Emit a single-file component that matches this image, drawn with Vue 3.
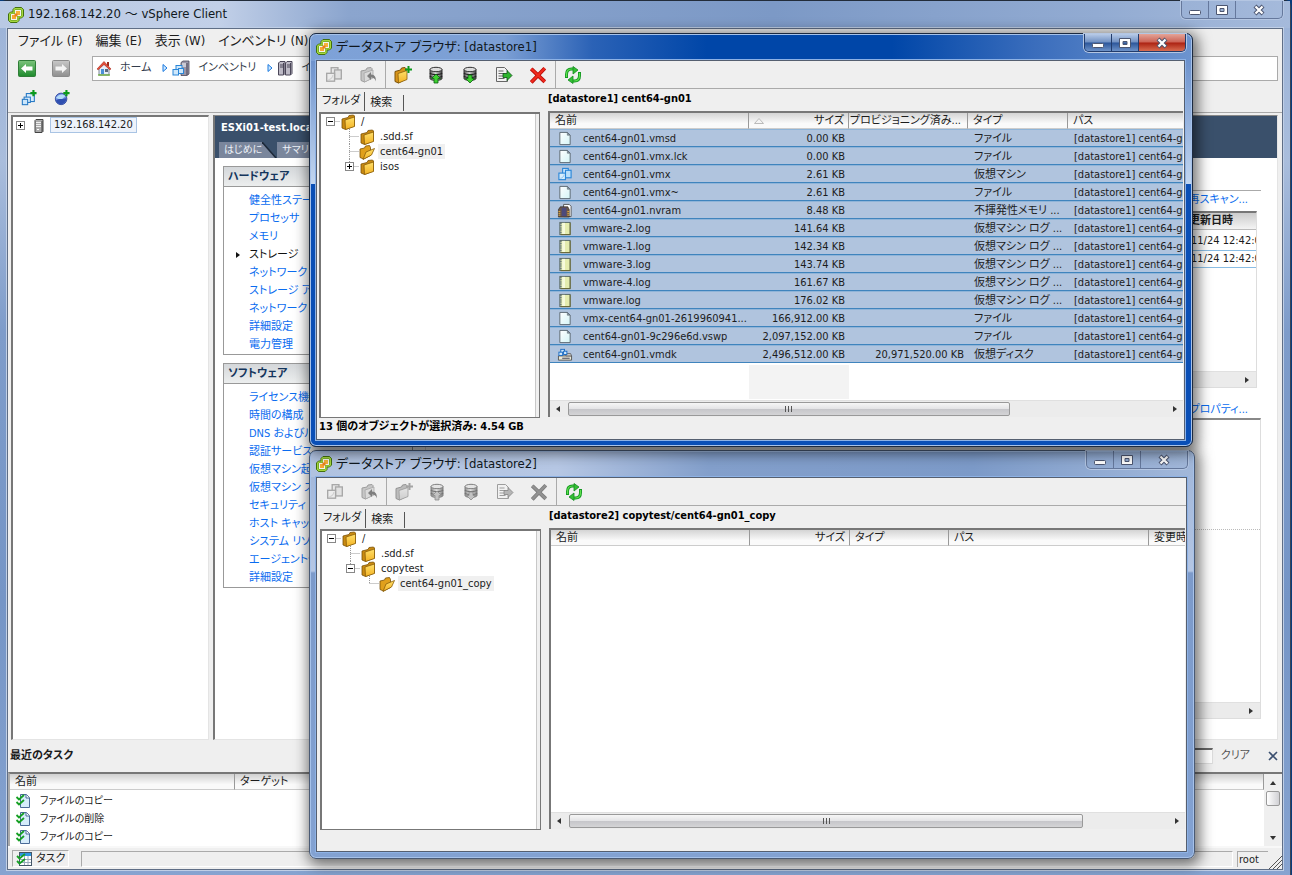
<script setup>
const menus = ['ファイル (F)', '編集 (E)', '表示 (W)', 'インベントリ (N)']
const hardware = ['健全性ステータス', 'プロセッサ', 'メモリ', 'ストレージ', 'ネットワーク', 'ストレージ アダプタ', 'ネットワーク アダプタ', '詳細設定', '電力管理']
const software = ['ライセンス機能', '時間の構成', 'DNS およびルーティング', '認証サービス', '仮想マシン起動', '仮想マシン スワップ', 'セキュリティ プロファイル', 'ホスト キャッシュ', 'システム リソース', 'エージェント仮想', '詳細設定']
const tasks = ['ファイルのコピー', 'ファイルの削除', 'ファイルのコピー']

const file = 'ファイル'
const log = '仮想マシン ログ ...'
const row = (icon, name, size, type, prov = '') => ({ icon, name, size, prov, type, path: '[datastore1] cent64-gn01' })
const files = [
  row('file', 'cent64-gn01.vmsd', '0.00 KB', file),
  row('file', 'cent64-gn01.vmx.lck', '0.00 KB', file),
  row('vm', 'cent64-gn01.vmx', '2.61 KB', '仮想マシン'),
  row('file', 'cent64-gn01.vmx~', '2.61 KB', file),
  row('nvram', 'cent64-gn01.nvram', '8.48 KB', '不揮発性メモリ ...'),
  row('log', 'vmware-2.log', '141.64 KB', log),
  row('log', 'vmware-1.log', '142.34 KB', log),
  row('log', 'vmware-3.log', '143.74 KB', log),
  row('log', 'vmware-4.log', '161.67 KB', log),
  row('log', 'vmware.log', '176.02 KB', log),
  row('file', 'vmx-cent64-gn01-2619960941...', '166,912.00 KB', file),
  row('file', 'cent64-gn01-9c296e6d.vswp', '2,097,152.00 KB', file),
  row('disk', 'cent64-gn01.vmdk', '2,496,512.00 KB', '仮想ディスク', '20,971,520.00 KB'),
]

const tools = [
  { id: 'vm', label: '登録', off: [1, 2] },
  { id: 'movefolder', label: '上へ', off: [1, 2] },
  { id: 'newfolder', label: '新規フォルダ', sep: true, off: [2] },
  { id: 'upload', label: 'アップロード', off: [2] },
  { id: 'download', label: 'ダウンロード', off: [2] },
  { id: 'moveto', label: '移動', off: [2] },
  { id: 'delete', label: '削除', off: [2] },
  { id: 'refresh', label: '更新', sep: true, off: [] },
]

const browsers = [
  {
    n: 1,
    title: 'データストア ブラウザ: [datastore1]',
    heading: '[datastore1] cent64-gn01',
    thumb: '74%',
    status: '13 個のオブジェクトが選択済み: 4.54 GB',
    tree: [
      { level: 0, text: '/', box: 'minus' },
      { level: 1, text: '.sdd.sf' },
      { level: 1, text: 'cent64-gn01', open: true },
      { level: 1, text: 'isos', box: 'plus', last: true },
    ],
    cols: [
      { k: 'name', t: '名前', w: 199 },
      { k: 'size', t: 'サイズ', w: 100, right: true, sort: true },
      { k: 'prov', t: 'プロビジョニング済み...', w: 119, right: true },
      { k: 'type', t: 'タイプ', w: 100 },
      { k: 'path', t: 'パス' },
    ],
    rows: files,
  },
  {
    n: 2,
    title: 'データストア ブラウザ: [datastore2]',
    heading: '[datastore2] copytest/cent64-gn01_copy',
    thumb: '86%',
    status: '',
    tree: [
      { level: 0, text: '/', box: 'minus' },
      { level: 1, text: '.sdd.sf' },
      { level: 1, text: 'copytest', box: 'minus', last: true },
      { level: 2, text: 'cent64-gn01_copy', open: true, last: true },
    ],
    cols: [
      { k: 'name', t: '名前', w: 199 },
      { k: 'size', t: 'サイズ', w: 100, right: true },
      { k: 'type', t: 'タイプ', w: 99 },
      { k: 'path', t: 'パス', w: 200 },
      { k: 'time', t: '変更時間' },
    ],
    rows: [],
  },
]
</script>

<template>
  <svg class="defs" aria-hidden="true">
    <linearGradient id="gFold" x2="0" y2="1"><stop offset="0" stop-color="#ffe06a" /><stop offset="1" stop-color="#f3b224" /></linearGradient>
    <linearGradient id="gGreen" x2="0" y2="1"><stop offset="0" stop-color="#7cc47c" /><stop offset="1" stop-color="#1d8a2c" /></linearGradient>
    <linearGradient id="gGray" x2="0" y2="1"><stop offset="0" stop-color="#c8c8c8" /><stop offset="1" stop-color="#8f8f8f" /></linearGradient>
    <linearGradient id="gDb" x2="1" y2="0"><stop offset="0" stop-color="#555" /><stop offset=".45" stop-color="#ddd" /><stop offset="1" stop-color="#444" /></linearGradient>
    <linearGradient id="gPage" x2="1" y2="1"><stop offset="0" stop-color="#fff" /><stop offset="1" stop-color="#d4f4f6" /></linearGradient>
    <symbol id="logo" viewBox="0 0 16 16">
      <path d="M7 .5h6.500l2 2V9l-2 2H11v2.500l-2 2H2.500l-2-2V7l2-2H5V2.500z" fill="#6fa426" stroke="#42700e" />
      <path d="M7.200 1.600h6l1.200 1.200v6l-1.200 1.200H10v3.200l-1.200 1.200h-6l-1.200-1.200v-6l1.200-1.200H6V2.800z" fill="none" stroke="#a6d83e" stroke-width="1.200" />
      <path d="M7 3h6v6H9v4H3V7h4z" fill="#f4f4f0" />
      <path d="M8 4h4v4H8z" fill="#f7b13c" /><path d="M4 8h4v4H4z" fill="#f7a733" /><path d="M6.500 6.500h3v3h-3z" fill="#e8801c" />
    </symbol>
    <symbol id="back" viewBox="0 0 18 17">
      <rect x=".5" y=".5" width="17" height="16" rx="1" fill="url(#gGreen)" stroke="#2f7d38" />
      <path d="M3 8.500 8 4v2.500h6.500v4H8V13z" fill="#fff" />
    </symbol>
    <symbol id="forward" viewBox="0 0 18 17">
      <rect x=".5" y=".5" width="17" height="16" rx="1" fill="url(#gGray)" stroke="#8a8a8a" />
      <path d="M15 8.500 10 4v2.500H3.500v4H10V13z" fill="#f4f4f4" />
    </symbol>
    <symbol id="home" viewBox="0 0 16 16">
      <path d="M3 8v7h10V8L8 4z" fill="#e6eef8" stroke="#5a6a80" stroke-width=".8" /><path d="M11 2h2v4h-2z" fill="#9a2a1a" />
      <path d="M1 9 8 1.500 15 9l-1.200.8L8 4.500 2.200 9.800z" fill="#e8503a" stroke="#a82a1c" stroke-width=".6" />
      <path d="M5 9h3v5H5z" fill="#4a90d8" /><path d="M9 9h3v3H9z" fill="#5a6a80" /><path d="M2 15h12" stroke="#70b040" stroke-width="1.4" />
    </symbol>
    <symbol id="vm" viewBox="0 0 16 16">
      <rect x="5.500" y="1.500" width="6" height="6" fill="#cfe8fb" stroke="#2a86d8" stroke-width="1.200" />
      <rect x="8.500" y="3.500" width="6" height="8" fill="#b8defa" stroke="#2a86d8" stroke-width="1.200" />
      <rect x="1.500" y="6.500" width="7" height="7" fill="#d8eefc" stroke="#2a86d8" stroke-width="1.200" />
      <path d="M3 12c2 0 4-2 4-4" stroke="#8cc4f0" fill="none" />
    </symbol>
    <symbol id="addvm" viewBox="0 0 18 18">
      <rect x="6" y="4" width="9" height="9" fill="#d8ecfc" stroke="#2678c4" stroke-width="1.200" />
      <rect x="3.500" y="8" width="7" height="6" fill="#e6f4ff" stroke="#2678c4" stroke-width="1.200" />
      <rect x="1.500" y="10.500" width="6" height="6" fill="#cce6fb" stroke="#2678c4" stroke-width="1.200" />
      <path d="M14 0v7M10.500 3.500h7" stroke="#0c9a1c" stroke-width="2.400" />
    </symbol>
    <symbol id="addpool" viewBox="0 0 18 18">
      <circle cx="8" cy="10" r="6.500" fill="#6a8ae0" stroke="#30489c" /><path d="M2 9C6 4 10 4 13 7L8 11z" fill="#b4dcf8" /><path d="M2 12c4-3 8-1 12-3 0 4-3 7-6 7s-5-2-6-4z" fill="#2f4fb0" />
      <path d="M14 0v7M10.500 3.500h7" stroke="#0c9a1c" stroke-width="2.400" />
    </symbol>
    <symbol id="inventory" viewBox="0 0 18 16">
      <path d="M9 2.500 11 1h6v13l-2 1.500H9z" fill="#9a96a8" stroke="#4a4658" stroke-width=".8" /><path d="M10 4h4M10 6h4" stroke="#fff" /><path d="M15 3v12" stroke="#4a4658" />
      <rect x="4" y="5.500" width="6" height="6" fill="#cfe8fb" stroke="#2a86d8" /><rect x="6.500" y="8.500" width="5" height="5" fill="#cfe8fb" stroke="#2a86d8" /><rect x="1" y="9.500" width="5.500" height="5.500" fill="#cfe8fb" stroke="#2a86d8" />
    </symbol>
    <symbol id="servers" viewBox="0 0 16 16">
      <path d="M1.500 3 3 1.500h5v12L6.500 15h-5z" fill="#bdbac6" stroke="#4a4658" /><path d="M8.500 3 10 1.500h5v12L13.500 15h-5z" fill="#bdbac6" stroke="#4a4658" />
      <path d="M3 5h3M3 7h3M10 5h3M10 7h3M6.500 3v12M13.500 3v12" stroke="#4a4658" />
    </symbol>
    <symbol id="host" viewBox="0 0 10 14">
      <path d="M1 1.500 2 .5h7v12l-1 1H1z" fill="#aaa" stroke="#444" /><path d="M2 3.500h5M2 5.500h5M2 7.500h5" stroke="#eee" /><path d="M8 2v11" stroke="#444" /><path d="M3 10.500h2" stroke="#fff" />
    </symbol>
    <symbol id="folder" viewBox="0 0 16 16">
      <path d="M2 5 8 3.500 9 1.500 13.500 1l1 1v10l-9 3.500L2 14z" fill="#c98a10" stroke="#7a5208" stroke-width=".8" />
      <path d="m5 6 9.500-3v9.500L5.500 15.500z" fill="url(#gFold)" stroke="#8a5e0a" stroke-width=".8" />
    </symbol>
    <symbol id="folderopen" viewBox="0 0 16 16">
      <path d="M1 5 5.500 4l1-2 4-.5 1 2v8L4.500 15 1 13.500z" fill="#e0a01c" stroke="#7a5208" stroke-width=".8" />
      <path d="M7 8 15.500 4.500 12.500 11 4 15.500z" fill="url(#gFold)" stroke="#8a5e0a" stroke-width=".8" />
    </symbol>
    <symbol id="movefolder" viewBox="0 0 18 18">
      <path d="M2 5 7 4l1-2 4-.5 1 1V12l-7.500 4L2 14.500z" fill="#aaa" stroke="#666" /><path d="m5 7 9-3v8l-8.500 4z" fill="#ccc" stroke="#777" stroke-width=".8" />
      <path d="m8 10 4-4v2.500c4 0 5 3 5 7-1-3-2.500-4-5-4V14z" fill="#333" />
    </symbol>
    <symbol id="newfolder" viewBox="0 0 18 18">
      <path d="M1 5.500 6.500 4l1-2 3.500-.5 1 1V13l-7.500 4L1 15.500z" fill="#d8941a" stroke="#7a5208" /><path d="m4 7.500 9-3v9L4.500 17z" fill="url(#gFold)" stroke="#8a5e0a" stroke-width=".8" />
      <path d="M14.500 0v7M11 3.500h7" stroke="#0c9a1c" stroke-width="2" />
    </symbol>
    <symbol id="upload" viewBox="0 0 16 18">
      <path d="M2 3.500v9C2 15 14 15 14 12.500v-9z" fill="url(#gDb)" stroke="#333" /><path d="M2 7c1 2 11 2 12 0M2 10c1 2 11 2 12 0" fill="none" stroke="#222" stroke-width="1.200" />
      <ellipse cx="8" cy="3.500" rx="6" ry="2.200" fill="#ddd" stroke="#333" /><path d="m8 8 4.500 4.500H10V17H6v-4.500H3.500z" fill="#3fd030" stroke="#0b5f12" stroke-width=".8" />
    </symbol>
    <symbol id="download" viewBox="0 0 16 18">
      <path d="M2 3.500v9C2 15 14 15 14 12.500v-9z" fill="url(#gDb)" stroke="#333" /><path d="M2 7c1 2 11 2 12 0M2 10c1 2 11 2 12 0" fill="none" stroke="#222" stroke-width="1.200" />
      <ellipse cx="8" cy="3.500" rx="6" ry="2.200" fill="#ddd" stroke="#333" /><path d="m8 17 4.500-4.500H10V9H6v3.500H3.500z" fill="#3fd030" stroke="#0b5f12" stroke-width=".8" />
    </symbol>
    <symbol id="moveto" viewBox="0 0 18 18">
      <path d="M1.500 1.500h8l3 3v11h-11z" fill="#f2f2f2" stroke="#666" /><path d="M3.500 5h5M3.500 7.500h6M3.500 10h6M3.500 12.500h6" stroke="#666" />
      <path d="M8 7.500h4V4.500l5 5-5 5v-3H8z" fill="#2cb52c" stroke="#0b4f12" stroke-width=".8" />
    </symbol>
    <symbol id="delete" viewBox="0 0 16 16"><path d="M2 2.500 14 14M14 2 2 14.500" stroke="#b80c08" stroke-width="3.400" /><path d="M2 2.500 14 14M14 2 2 14.500" stroke="#f02a1e" stroke-width="2" /></symbol>
    <symbol id="refresh" viewBox="0 0 18 18">
      <path d="M2.500 12V8.500c0-3.500 2-5.500 5-5.500H10M15.500 6v3.500c0 3.500-2 5.500-5 5.500H8" fill="none" stroke="#159a22" stroke-width="3" />
      <path d="M2.500 11V8.500C2.500 5.500 4 3 7.500 3H10M15.500 7v2.500c0 3-1.500 5.500-5 5.500H8" fill="none" stroke="#5ee04e" stroke-width="1.200" />
      <path d="M9 0v3h4v6l-4.500-3M13 4.500 9 8.500" fill="none" />
      <path d="M9 .5 14 4l-5 4z" fill="#34bf34" stroke="#128a20" stroke-width=".8" /><path d="M9 17.500 4 14l5-4z" fill="#34bf34" stroke="#128a20" stroke-width=".8" />
    </symbol>
    <symbol id="file" viewBox="0 0 16 16"><path d="M2.500 1.500h8l3 3v10h-11z" fill="url(#gPage)" stroke="#5a6670" /><path d="M10.500 1.500v3h3z" fill="#8a98a4" stroke="#5a6670" stroke-width=".6" /></symbol>
    <symbol id="log" viewBox="0 0 16 16"><rect x="2.500" y="1.500" width="11" height="13" fill="#e4ecae" stroke="#566" /><path d="M5 2h3v12H5z" fill="#f6fadc" /><path d="M3.500 2v12" stroke="#567" stroke-width="2" stroke-dasharray="1 1" /><path d="M13.500 2v12.500h-10" fill="none" stroke="#6c6a30" /></symbol>
    <symbol id="nvram" viewBox="0 0 16 16">
      <path d="M6.500 1.500h6l2 2v11h-8z" fill="#fff" stroke="#555" /><path d="M1 7l2-3h8l1.500 3v8H1z" fill="#6a564a" stroke="#221a14" stroke-width=".6" /><rect x="4.500" y="5" width="5" height="9" fill="#4c4a7c" />
      <path d="M1 9h2M1 11h2M1 13h2M10.500 9h2M10.500 11h2M10.500 13h2" stroke="#e8b040" />
    </symbol>
    <symbol id="disk" viewBox="0 0 16 16">
      <path d="M1 9.500h14V14H1z" fill="#e8e8d8" stroke="#555" /><path d="M9 7h5l1 2.500H9z" fill="#ccc" stroke="#555" stroke-width=".8" /><path d="M5 12h8" stroke="#556" stroke-width="1.200" />
      <rect x="3.500" y="2.500" width="4" height="4" fill="#cfe8fb" stroke="#1a6cc4" /><rect x="6.500" y="4.500" width="3.500" height="3.500" fill="#cfe8fb" stroke="#1a6cc4" /><rect x="1.500" y="5.500" width="4" height="3.500" fill="#cfe8fb" stroke="#1a6cc4" />
    </symbol>
    <symbol id="task" viewBox="0 0 16 16">
      <path d="M5.500 1.500h6l3 3v10h-9z" fill="#d6ecfb" stroke="#4a6a98" /><path d="M11 1.500v3.500h3.500" fill="#fff" stroke="#4a6a98" />
      <path d="m1.500 4 2.500 2.500L9 2M1.500 9l2.500 2.500L9 7" fill="none" stroke="#16a024" stroke-width="1.800" />
    </symbol>
    <symbol id="tasklist" viewBox="0 0 16 16">
      <rect x="3.500" y="1.500" width="12" height="13" fill="#fff" stroke="#456" /><path d="M4 2h11v3H4z" fill="#2f96e0" /><path d="M4 8.500h11M4 11.500h11M8.500 5v9M12 5v9" stroke="#9ab" />
      <path d="m1 5 2.500 2.500L9 3M1 10l2.500 2.500L9 8" fill="none" stroke="#16a024" stroke-width="1.800" />
    </symbol>
    <symbol id="min" viewBox="0 0 14 12"><rect x="1.500" y="6.500" width="11" height="4" rx="1" fill="#fff" stroke="#4c5670" /></symbol>
    <symbol id="max" viewBox="0 0 14 12"><path d="M1.500 1.500h11v9h-11zM5 4.500v3h4v-3z" fill="#fff" fill-rule="evenodd" stroke="#4c5670" /></symbol>
    <symbol id="cls" viewBox="0 0 14 12"><path d="m3 2 8 8M11 2l-8 8" stroke="#4c5670" stroke-width="4.200" /><path d="m3.500 2.500 7 7M10.500 2.500l-7 7" stroke="#fff" stroke-width="2.200" /></symbol>
  </svg>

  <div class="desktop">
    <main class="win main">
      <header class="title">
        <svg class="i16"><use href="#logo" /></svg>
        <h1>192.168.142.20 ～ vSphere Client</h1>
        <div class="caption">
          <button aria-label="最小化"><svg><use href="#min" /></svg></button>
          <button aria-label="最大化"><svg><use href="#max" /></svg></button>
          <button class="close" aria-label="閉じる"><svg><use href="#cls" /></svg></button>
        </div>
      </header>
      <div class="client">
        <nav class="menu"><button v-for="m in menus" :key="m">{{ m }}</button></nav>
        <div class="navrow">
          <button aria-label="戻る"><svg class="nav-i"><use href="#back" /></svg></button>
          <button aria-label="進む"><svg class="nav-i"><use href="#forward" /></svg></button>
          <div class="crumbs">
            <svg class="i16"><use href="#home" /></svg><a href="#">ホーム</a>
            <svg class="tri" viewBox="0 0 6 10"><path d="M1 1.500 5 5 1 8.500z" fill="#cfe8ff" stroke="#1a7ae0" /></svg>
            <svg class="i18"><use href="#inventory" /></svg><a href="#">インベントリ</a>
            <svg class="tri" viewBox="0 0 6 10"><path d="M1 1.500 5 5 1 8.500z" fill="#cfe8ff" stroke="#1a7ae0" /></svg>
            <svg class="i16"><use href="#servers" /></svg><a href="#">インベントリ</a>
          </div>
        </div>
        <div class="tools2">
          <button aria-label="新規仮想マシン"><svg class="i16"><use href="#addvm" /></svg></button>
          <button aria-label="新規リソース プール"><svg class="i16"><use href="#addpool" /></svg></button>
        </div>
        <div class="work">
          <div class="hosttree">
            <svg class="box" viewBox="0 0 9 9"><rect x=".5" y=".5" width="8" height="8" fill="#fff" stroke="#888" /><path d="M2 4.500h5M4.500 2v5" stroke="#000" /></svg>
            <svg class="host"><use href="#host" /></svg>
            <span>192.168.142.20</span>
          </div>
          <section class="config">
            <div class="band">
              <h2>ESXi01-test.localdomain</h2>
              <div class="htabs">
                <button>はじめに</button><svg viewBox="0 0 15 16"><path d="M0 0 14 16H0z" fill="#7a869c" /><path d="M0 0 14 16" stroke="#1c2838" stroke-width="1.500" /></svg><button>サマリ</button>
              </div>
            </div>
            <div class="cbody">
              <div class="boxes">
                <section class="nbox">
                  <h3>ハードウェア</h3>
                  <ul><li v-for="h in hardware" :key="h" :class="{ cur: h === 'ストレージ' }"><a href="#">{{ h }}</a></li></ul>
                </section>
                <section class="nbox">
                  <h3>ソフトウェア</h3>
                  <ul><li v-for="(s, i) in software" :key="i"><a href="#">{{ s }}</a></li></ul>
                </section>
              </div>
              <div class="detail">
                <div class="d-link top"><a href="#">再スキャン...</a></div>
                <div class="d-list">
                  <table>
                    <thead><tr><th>更新日時</th></tr></thead>
                    <tbody><tr><td>11/24 12:42:0</td></tr><tr><td>11/24 12:42:0</td></tr></tbody>
                  </table>
                  <div class="d-bar"><i class="ar rt"></i></div>
                </div>
                <div class="d-link props"><a href="#">プロパティ...</a></div>
                <div class="d-box"><div class="d-upper"></div><div class="d-bar"><i class="ar rt"></i></div></div>
              </div>
            </div>
          </section>
        </div>
        <div class="recent">
          <h2>最近のタスク</h2>
          <input type="text" aria-label="タスクのフィルタ" />
          <button class="clear">クリア</button>
          <button class="x" aria-label="閉じる"><svg viewBox="0 0 10 10"><path d="m1 1 8 8M9 1 1 9" stroke="#3c5070" stroke-width="1.600" /></svg></button>
        </div>
        <div class="tasklist">
          <table>
            <colgroup><col class="c-name" /><col /></colgroup>
            <thead><tr><th>名前</th><th>ターゲット</th></tr></thead>
            <tbody><tr v-for="(t, i) in tasks" :key="i"><td><svg class="i16"><use href="#task" /></svg>{{ t }}</td><td></td></tr></tbody>
          </table>
          <div class="vbar"><i class="ar up"></i><b></b><i class="ar down"></i></div>
        </div>
        <footer class="status">
          <button><svg class="i16"><use href="#tasklist" /></svg>タスク</button>
          <div class="field"></div>
          <div class="user">root</div>
          <svg class="grip" viewBox="0 0 14 14"><path d="M1 14 14 1M5 14l9-9M9 14l5-5" stroke="#555" /></svg>
        </footer>
      </div>
    </main>

    <section v-for="b in browsers" :key="b.n" class="win browser" :class="'b' + b.n">
      <header class="title">
        <svg class="i16"><use href="#logo" /></svg>
        <h1>{{ b.title }}</h1>
        <div class="caption">
          <button aria-label="最小化"><svg><use href="#min" /></svg></button>
          <button aria-label="最大化"><svg><use href="#max" /></svg></button>
          <button class="close" aria-label="閉じる"><svg><use href="#cls" /></svg></button>
        </div>
      </header>
      <div class="client">
        <div class="toolbar">
          <button v-for="t in tools" :key="t.id" :aria-label="t.label" :disabled="t.off.includes(b.n)" :class="{ sep: t.sep }">
            <svg class="i18"><use :href="'#' + t.id" /></svg>
          </button>
        </div>
        <div class="panes">
          <div class="folders">
            <div class="tabs"><button class="on">フォルダ</button><button>検索</button></div>
            <div class="tree">
              <ul>
                <li v-for="n in b.tree" :key="n.text" :class="'l' + n.level">
                  <svg class="gut" viewBox="0 0 19 15">
                    <path v-if="n.level" :d="n.last ? 'M9.500 0v8' : 'M9.500 0v15'" stroke="#999" stroke-dasharray="1 1" />
                    <path d="M9.500 7.500H19" stroke="#999" stroke-dasharray="1 1" />
                    <rect v-if="n.box" x="5.500" y="3.500" width="8" height="8" fill="#fff" stroke="#888" />
                    <path v-if="n.box" :d="n.box === 'plus' ? 'M7 7.500h5M9.500 5v5' : 'M7 7.500h5'" stroke="#000" />
                  </svg>
                  <svg class="i16"><use :href="n.open ? '#folderopen' : '#folder'" /></svg>
                  <span :class="{ sel: n.open }">{{ n.text }}</span>
                </li>
              </ul>
            </div>
            <div class="selinfo">{{ b.status }}</div>
          </div>
          <div class="contents">
            <h2>{{ b.heading }}</h2>
            <div class="grid">
              <div class="gscroll">
                <table>
                  <colgroup><col v-for="c in b.cols" :key="c.k" :style="c.w ? { width: c.w + 'px' } : {}" /></colgroup>
                  <thead>
                    <tr>
                      <th v-for="c in b.cols" :key="c.k" :class="{ tight: c.k === 'prov', r: c.right && c.k !== 'prov' }">
                        <div><svg v-if="c.sort" class="sort" viewBox="0 0 10 6"><path d="M.5 5.500 5 .5l4.500 5z" fill="#f4f4f4" stroke="#bbb" /></svg><span>{{ c.t }}</span></div>
                      </th>
                    </tr>
                  </thead>
                  <tbody>
                    <tr v-for="r in b.rows" :key="r.name">
                      <td v-for="c in b.cols" :key="c.k" :class="{ r: c.right }">
                        <svg v-if="c.k === 'name'" class="i16"><use :href="'#' + r.icon" /></svg>{{ r[c.k] }}
                      </td>
                    </tr>
                  </tbody>
                </table>
                <div v-if="b.rows.length" class="sortcol"></div>
              </div>
              <div class="hbar">
                <i class="ar lt"></i>
                <div class="track"><div class="thumb" :style="{ width: b.thumb }"><s></s><s></s><s></s></div></div>
                <i class="ar rt"></i>
              </div>
            </div>
          </div>
        </div>
      </div>
    </section>
  </div>
</template>

<style>
html, body { margin: 0; height: 100%; overflow: hidden; }
</style>

<style scoped>
.defs { position: absolute; width: 0; height: 0; }
.desktop {
  position: relative; height: 100vh; min-height: 640px; overflow: hidden; background: #083c7c;
  font: 11px/18px "DejaVu Sans Condensed", "Noto Sans CJK JP", sans-serif; font-feature-settings: "palt"; color: #1c1c1c;
}
.desktop * { box-sizing: border-box; }
button { font: inherit; font-feature-settings: inherit; color: inherit; background: none; border: 0; padding: 0; margin: 0; white-space: nowrap; display: flex; align-items: center; justify-content: center; }
h1, h2, h3 { margin: 0; font-size: inherit; font-weight: bold; white-space: nowrap; }
ul { margin: 0; padding: 0; list-style: none; white-space: nowrap; }
a { text-decoration: none; color: inherit; }
table { border-collapse: separate; border-spacing: 0; table-layout: fixed; width: 100%; }
svg { flex: none; display: block; }
.i16 { width: 16px; height: 16px; }
.i18 { width: 18px; height: 18px; }

.win { display: flex; flex-direction: column; }
.title { display: flex; align-items: center; flex: none; gap: 3px; }
.title h1 { font-size: 13px; line-height: 20px; font-weight: normal; color: #101820; padding: 0 4px 1px 1px; flex: 1; }
.caption { display: flex; align-self: flex-start; border: 1px solid #65789c; border-top: 0; border-radius: 0 0 5px 5px; box-shadow: 0 0 0 1px #b4c6e2; overflow: hidden; }
.caption button { width: 27px; height: 17px; border-right: 1px solid #65789c; }
.caption button.close { width: 46px; border-right: 0; }
.caption svg { width: 14px; height: 12px; }
.client { flex: 1; min-height: 0; display: flex; flex-direction: column; background: #efefef; }

.main {
  height: 100%; margin-right: 1px; padding: 0 7px 5px; border: 1px solid #3a4658; border-top-color: #222c3a; border-width: 1px 1px 0 0; border-radius: 6px 6px 0 0;
  background: linear-gradient(#8ea8d0 0, #9db4d8 28px, #a9bddc 160px, #7e9cca 330px, #7595c6 600px, #86a3d0 100%);
}
.main .title { height: 27px; margin: 0 -7px; padding: 0 7px 0 8px; background: linear-gradient(90deg, #b9c9e4, #c2d0e8 17%, #8ba5ce 27%, #7c99c6 60%, #92abd2 85%, #a5badb); }
.main .client { border: 1px solid #5f6e86; outline: 1px solid #c0cfe6; }

.menu { display: flex; height: 23px; gap: 13px; padding-left: 10px; font-size: 13px; flex: none; }
.navrow { display: flex; height: 32px; align-items: center; padding: 0 4px 0 10px; gap: 16px; flex: none; }
.nav-i { width: 18px; height: 17px; }
.crumbs { flex: 1; height: 25px; margin-left: 6px; background: #fff; border: 1px solid #aaa; display: flex; align-items: center; padding-left: 3px; gap: 4px; overflow: hidden; white-space: nowrap; color: #333c4c; }
.crumbs a { margin: 0 7px 0 4px; }
.tri { width: 6px; height: 10px; }
.tools2 { display: flex; height: 28px; gap: 17px; padding-left: 13px; flex: none; }
.work { flex: 1; min-height: 0; display: flex; gap: 4px; border-top: 1px solid #a8a8a8; padding: 2px 4px 0 3px; }
.hosttree { width: 198px; border: 1px solid #e4e4e4; border-left: 2px solid #777; border-top: 2px solid #777; background: #fff; display: flex; align-items: flex-start; padding: 0 0 0 3px; }
.hosttree .box { width: 9px; height: 9px; margin-top: 4px; }
.hosttree .host { width: 10px; height: 14px; margin: 2px 6px 0 9px; }
.hosttree span { border: 1px solid #a9c4e4; background: #eef3fb; line-height: 14px; padding: 0 3px; }
.config { flex: 1; min-width: 0; display: flex; flex-direction: column; border: 1px solid #e4e4e4; border-left: 2px solid #777; border-top: 1px solid #888; background: #fff; }
.band { background: #3a506b; color: #fff; height: 42px; flex: none; }
.band h2 { line-height: 23px; padding: 0 6px; height: 26px; }
.htabs { display: flex; padding-left: 4px; line-height: 16px; font-size: 10px; }
.htabs button { background: #7a869c; padding: 0 0 0 5px; height: 16px; color: #eef2f8; }
.htabs svg { width: 15px; height: 16px; }
.htabs button + svg + button { padding: 0 8px 0 5px; }
.cbody { flex: 1; min-height: 0; display: flex; padding: 8px 16px 20px 8px; gap: 12px; }
.boxes { width: 190px; flex: none; }
.nbox { border: 1px solid #999; margin-bottom: 8px; overflow: hidden; }
.nbox h3 { height: 20px; line-height: 19px; padding-left: 4px; color: #14355c; background: linear-gradient(#d4d7da, #eceeee); border-bottom: 1px solid #999; }
.nbox ul { padding: 5px 0 0 25px; color: #0a6cf0; }
.nbox li { height: 18px; }
.nbox li.cur { color: #111; display: flex; align-items: center; margin-left: -13px; }
.nbox li.cur::before { content: ""; border: 3px solid transparent; border-left: 4px solid #111; border-right: 0; margin-right: 9px; }
.detail { flex: 1; min-width: 0; display: flex; flex-direction: column; }
.d-link { text-align: right; color: #0a6cf0; padding-right: 13px; line-height: 18px; flex: none; }
.d-link.top { margin-top: 24px; border-top: 1px solid #aaa; height: 21px; }
.d-list { height: 177px; flex: none; margin-right: 4px; border: 1px solid #ddd; border-top: 2px solid #777; display: flex; flex-direction: column; justify-content: space-between; }
.d-list th, .d-list td { text-align: left; padding: 0 0 0 calc(100% - 65px); line-height: 18px; white-space: nowrap; overflow: hidden; }
.d-list th { padding-left: calc(100% - 67px); line-height: 16px; font-weight: bold; background: linear-gradient(#ccc, #f4f4f4); border-bottom: 1px solid #bbb; }
.d-list tbody tr:first-child td { border-top: 2px solid #fff; }
.d-list tr + tr td { line-height: 16px; border: 1px solid #8abde4; border-width: 1px 0; }
.d-bar { height: 16px; background: #ebebeb; display: flex; align-items: center; justify-content: flex-end; padding-right: 7px; border-top: 1px solid #e0e0e0; flex: none; }
.d-link.props { margin-top: 14px; line-height: 16px; }
.d-box { flex: 1; min-height: 0; border: 1px solid #ddd; border-top: 2px solid #888; display: flex; flex-direction: column; justify-content: space-between; }
.d-upper { height: 110px; border-bottom: 1px dotted #bbb; }

.ar { border: 3px solid transparent; width: 0; height: 0; flex: none; }
.ar.rt { border-left: 4px solid #333; border-right: 0; }
.ar.lt { border-right: 4px solid #333; border-left: 0; }
.ar.up { border-bottom: 4px solid #333; border-top: 0; }
.ar.down { border-top: 4px solid #333; border-bottom: 0; }

.recent { height: 32px; display: flex; align-items: center; padding: 0 4px 0 2px; flex: none; }
.recent h2 { flex: 1; }
.recent input { width: 160px; height: 16px; border: 1px solid #ddd; border-top: 2px solid #666; background: #fff; padding: 0; margin-right: 8px; }
.recent .clear { color: #555; margin-right: 18px; }
.recent .x svg { width: 10px; height: 10px; }
.tasklist { height: 74px; flex: none; border-top: 2px solid #777; border-left: 2px solid #aaa; background: #fff; display: flex; align-items: flex-start; }
.tasklist table { flex: 1; }
.c-name { width: 225px; }
th, td { padding: 0; font-weight: normal; text-align: left; white-space: nowrap; overflow: hidden; }
.tasklist th { height: 16px; line-height: 15px; padding-left: 5px; background: linear-gradient(#d0d0d0, #fafafa 70%); border-right: 1px solid #999; border-bottom: 1px solid #ccc; }
.tasklist td { height: 18px; padding-left: 5px; font-size: 10px; }
.tasklist td svg { display: inline-block; vertical-align: middle; margin-right: 9px; }
.tasklist tbody::before { content: ""; display: block; height: 2px; }
.vbar { width: 18px; height: 100%; background: #efefef; display: flex; flex-direction: column; align-items: center; padding: 7px 0 6px; }
.vbar b { width: 14px; height: 15px; margin: 6px 0 auto; border: 1px solid #999; border-radius: 2px; background: linear-gradient(90deg, #fff, #d0d0d4); }
.status { height: 23px; flex: none; display: flex; align-items: center; padding-left: 4px; border-top: 2px solid #f8f8f8; }
.status button { height: 17px; border: 1px solid #fff; border-top-color: #aaa; border-left-color: #aaa; padding: 0 3px; gap: 4px; }
.field { flex: 1; height: 16px; margin: 0 4px 0 12px; border: 1px solid #fff; border-top-color: #aaa; border-left-color: #aaa; }
.user { height: 16px; line-height: 15px; border-left: 1px solid #aaa; border-top: 1px solid #aaa; width: 31px; padding-left: 1px; }
.grip { width: 14px; height: 14px; align-self: flex-end; }

.browser { position: absolute; left: 309px; padding: 0 7px 6px 6px; border: 1px solid #1c2a40; border-radius: 7px; box-shadow: inset 0 0 0 1px #a6c2ea, 2px 3px 14px 3px rgba(0, 0, 0, .55); }
.browser .client { border: 1px solid #555f70; outline: 1px solid #8db2e6; }
.browser .title { height: 26px; margin: 0 -1px; padding-left: 1px; }
.b1 {
  top: 33px; right: 99px; bottom: 428px; z-index: 2;
  background:
    linear-gradient(90deg, #7ea2d8, #7c9fd4 22%, #2b62b6 32%, #0046a8 45%, #0046a8 66%, #3a6dbc 82%, #6d94cf) top / 100% 27px no-repeat,
    linear-gradient(#6d92cc, #c2d6f0) 0 27px / 100% 123px no-repeat,
    #0a4fb6;
}
.b1 .caption { border-color: #223c6c; }
.b1 .caption button { background: linear-gradient(#b8cbe8, #7090c2 48%, #2c569a 52%, #6d92c8); border-color: #223c6c; }
.b1 .caption button.close { background: linear-gradient(#e4a498, #cc6254 48%, #ac2212 52%, #d86c50); }
.b2 {
  top: 450px; right: 97px; bottom: 16px; z-index: 1; border-color: #4a5a74;
  background:
    linear-gradient(90deg, #b0c2e0, #b6c7e4 28%, #839fcb 45%, #7c9ac8 75%, #a2b8da) top / 100% 26px no-repeat,
    linear-gradient(#9fb5d9, #b4c6e4 120px, #7c9aca 122px, #83a2d2);
}
.b2 .client { padding-left: 1px; }
.toolbar { display: flex; height: 28px; border-bottom: 1px solid #aaa; flex: none; }
.toolbar button { width: 34px; }
.toolbar .sep { border-left: 1px solid #aaa; }
.toolbar button:disabled svg { filter: grayscale(1) opacity(.6); }
.toolbar .i18 { width: 18px; height: 18px; }
.panes { flex: 1; min-height: 0; display: flex; gap: 8px; padding: 0 1px 0 2px; }
.folders { width: 221px; display: flex; flex-direction: column; flex: none; }
.tabs { display: flex; height: 23px; padding: 3px 0 0 3px; flex: none; }
.tabs button { height: 16px; margin-top: 3px; padding: 0 11px 0 5px; border-right: 1px solid #555; }
.tabs .on { height: 19px; margin: 0; padding: 0 4px 2px 0; }
.tree { flex: 1; min-height: 0; background: #fff; border: 2px solid #777; border-width: 2px 1px 1px 2px; box-shadow: inset -3px 0 #f0f0f0, inset -4px 0 #c8c8c8; overflow: hidden; }
.tree li { display: flex; height: 15px; align-items: center; line-height: 15px; }
.gut { width: 19px; height: 15px; }
.tree .i16 { margin: 0 3px 0 0; }
.tree span { padding: 0 2px; }
.tree .sel { background: #f0f0f0; }
.l1 { padding-left: 19px; }
.l2 { padding-left: 38px; }
.selinfo { height: 21px; line-height: 17px; font-weight: bold; color: #000; flex: none; white-space: nowrap; overflow: visible; }
.contents { flex: 1; min-width: 0; display: flex; flex-direction: column; }
.contents h2 { height: 22px; line-height: 19px; color: #000; flex: none; }
.grid { flex: 1; min-height: 0; margin-bottom: 22px; display: flex; flex-direction: column; border-left: 2px solid #777; border-top: 2px solid #777; background: #fff; }
.gscroll { flex: 1; min-height: 0; overflow: hidden; display: flex; flex-direction: column; }
.grid th { height: 16px; background: linear-gradient(#d4d4d4, #fafafa 70%); border-bottom: 1px solid #ccc; padding: 0 4px 0 5px; border-right: 1px solid #999; }
.grid th.tight { padding: 0 0 0 1px; }
.grid th:last-child { border-right: 0; padding-right: 0; }
.grid th div { display: flex; align-items: center; height: 15px; line-height: 15px; }
.grid th.r div { justify-content: flex-end; }
.sort { width: 10px; height: 6px; margin-right: auto; }
.grid td { height: 18px; line-height: 15px; background: #b0c4de; border-bottom: 1px solid #3f84bd; border-top: 1px solid #8fb4d8; padding-left: 6px; }
.grid td.r { text-align: right; padding-right: 4px; }
.grid td svg { display: inline-block; vertical-align: middle; margin: -1px 10px 0 1px; height: 15px; }
.sortcol { flex: 1; width: 100px; margin: 2px 0 1px 199px; background: #f3f3f3; }
.hbar { height: 17px; background: #ececec; border-top: 1px solid #e0e0e0; display: flex; align-items: center; padding: 0 6px; flex: none; }
.track { flex: 1; margin: 0 8px; }
.thumb { height: 14px; border: 1px solid #999; border-radius: 2px; background: linear-gradient(#f6f6f6, #e4e4e6 48%, #c6c6ca 52%, #d4d4d6); display: flex; align-items: center; justify-content: center; gap: 2px; }
.thumb s { width: 1px; height: 6px; background: #555; }
</style>
